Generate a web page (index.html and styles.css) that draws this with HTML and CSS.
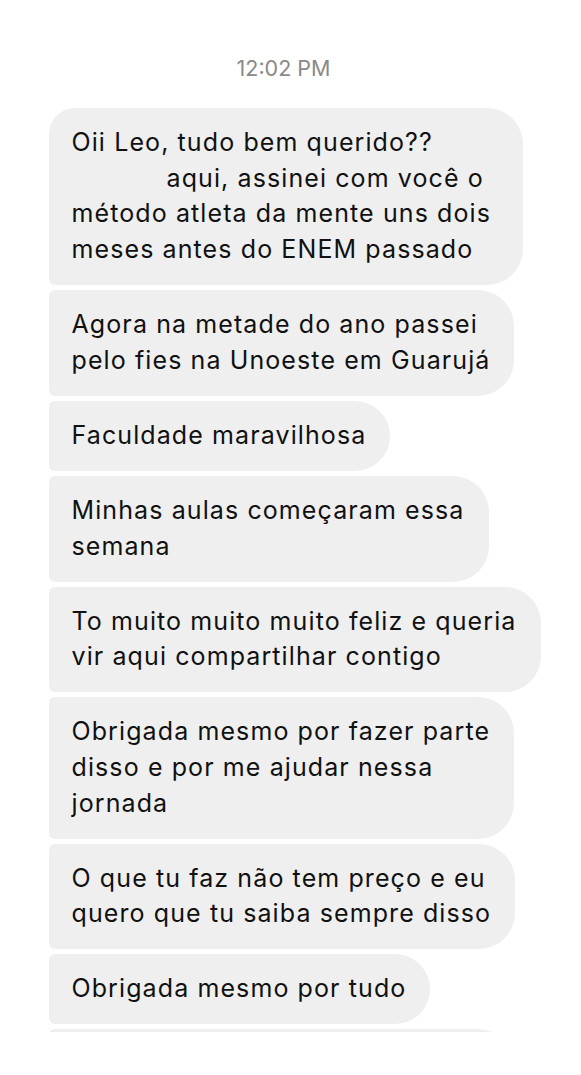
FILE: index.html
```html
<!DOCTYPE html>
<html lang="pt-BR">
<head>
    <meta charset="UTF-8">
    <meta name="viewport" content="width=device-width, initial-scale=1.0">
    <link rel="stylesheet" href="styles.css">
</head>
<body>
    <div class="chat">
        <div class="timestamp">12:02 PM</div>

        <div class="thread" id="thread">
            <div class="bubble first">Oii Leo, tudo bem querido??<br><span class="indent"></span>aqui, assinei com você o<br>método atleta da mente uns dois<br>meses antes do ENEM passado</div>
            <div class="bubble">Agora na metade do ano passei<br>pelo fies na Unoeste em Guarujá</div>
            <div class="bubble">Faculdade maravilhosa</div>
            <div class="bubble">Minhas aulas começaram essa<br>semana</div>
            <div class="bubble">To muito muito muito feliz e queria<br>vir aqui compartilhar contigo</div>
            <div class="bubble">Obrigada mesmo por fazer parte<br>disso e por me ajudar nessa<br>jornada</div>
            <div class="bubble">O que tu faz não tem preço e eu<br>quero que tu saiba sempre disso</div>
            <div class="bubble">Obrigada mesmo por tudo</div>
            <div class="bubble next"></div> <!-- next message, cut off by the screen edge -->
        </div>
    </div>
</body>
</html>
```

FILE: styles.css
```css
body {
    font-family: Inter, "Noto Sans", "Liberation Sans", sans-serif;
    background-color: #fff;
    margin: 0;
    padding: 0;
    color: #111;
}
.chat {
    height: 1032px;
    overflow: hidden; /* last bubble is cut off at the bottom */
}
.timestamp {
    text-align: center;
    color: #8a8a8a;
    font-size: 21.5px;
    line-height: 24px;
    padding-top: 56px;
    padding-right: 14px;
}
.thread {
    display: flex;
    flex-direction: column;
    align-items: flex-start;
    gap: 5px;
    margin-top: 28px;
    padding-left: 49px;
}
.bubble {
    background-color: #efefef;
    font-size: 25px;
    letter-spacing: 1.1px;
    line-height: 35.7px;
    padding: 17px 24px 17.3px 22.5px;
    border-radius: 36px 36px 36px 6px;
    border-top-left-radius: 6px;
    white-space: nowrap;
}
.bubble.first {
    border-top-left-radius: 26px;
    padding-right: 32px;
}
.bubble.next {
    width: 418px;
    height: 36px;
}
.indent {
    display: inline-block;
    width: 95px;
}
```
